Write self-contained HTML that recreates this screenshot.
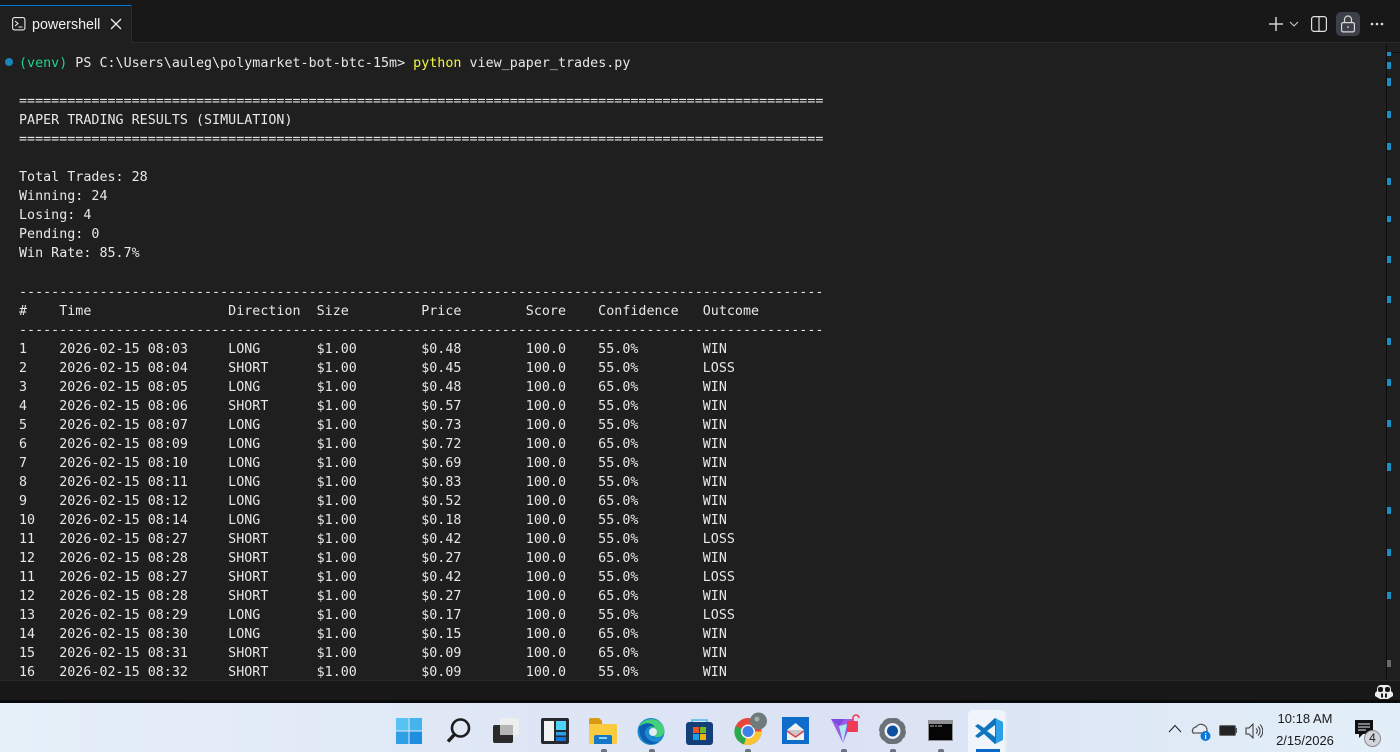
<!DOCTYPE html>
<html><head><meta charset="utf-8">
<style>
html,body{margin:0;padding:0;background:#1f1f1f}
#r{position:relative;width:1400px;height:752px;overflow:hidden;background:#1f1f1f}
#r div,#r svg,#r pre{position:absolute}
pre{margin:0;font:13.33px/19px "DejaVu Sans Mono",monospace;color:#e8e8e8;left:19px;top:54px;letter-spacing:.02px}
.y{color:#f5f543}.g{color:#23d18b}
.m{left:1387px;width:4px;background:#1a8fc4}
</style></head><body><div id="r">
<div style="left:0;top:0;width:1400px;height:43px;background:#181818"></div>
<div style="left:0;top:42px;width:1400px;height:1px;background:#2b2b2b"></div>
<div style="left:0;top:5px;width:131px;height:38px;background:#1f1f1f;border-top:1px solid #0078d4;box-sizing:border-box"></div>
<div style="left:131px;top:5px;width:1px;height:38px;background:#2b2b2b"></div>
<svg style="left:12px;top:17px" width="14" height="14" viewBox="0 0 14 14" fill="none" stroke="#e8e8e8" stroke-width="1.1"><rect x=".6" y=".6" width="12.3" height="12.3" rx="2"/><path d="M3 4l3 2.5-3 2.5M6.500 10h4"/></svg>
<div style="left:32px;top:16px;font:14.300px/18px 'Liberation Sans',sans-serif;color:#f0f0f0">powershell</div>
<svg style="left:110px;top:18px" width="12" height="12" viewBox="0 0 12 12" stroke="#eee" stroke-width="1.300"><path d="M1 1l10 10M11 1L1 11"/></svg>
<svg style="left:1268px;top:16px" width="16" height="16" stroke="#eee" stroke-width="1.300"><path d="M8 1v14M1 8h14"/></svg>
<svg style="left:1289px;top:21px" width="10" height="6" fill="none" stroke="#ccc" stroke-width="1.100"><path d="M1 1l4 4 4-4"/></svg>
<svg style="left:1311px;top:16px" width="16" height="16" fill="none" stroke="#e0e0e0" stroke-width="1.200"><rect x=".6" y=".6" width="14.800" height="14.800" rx="2.500"/><path d="M8 1v14"/></svg>
<div style="left:1336px;top:12px;width:24px;height:24px;border-radius:5px;background:#3e4049"></div>
<svg style="left:1340px;top:15px" width="16" height="18" fill="none" stroke="#d8d8d8" stroke-width="1.200"><rect x="1.600" y="7.600" width="12.800" height="9.300" rx="1.500"/><path d="M4.500 7.500V4.500a3.500 3.500 0 0 1 7 0v3"/><circle cx="8" cy="12" r=".9" fill="#ddd" stroke="none"/></svg>
<svg style="left:1370px;top:22px" width="14" height="4" fill="#ddd"><circle cx="2" cy="2" r="1.300"/><circle cx="7" cy="2" r="1.300"/><circle cx="12" cy="2" r="1.300"/></svg>
<div style="left:5px;top:58px;width:8px;height:8px;border-radius:50%;background:#1a85b5"></div>
<pre><span class="g">(venv)</span> PS C:\Users\auleg\polymarket-bot-btc-15m&gt; <span class="y">python</span> view_paper_trades.py

====================================================================================================
PAPER TRADING RESULTS (SIMULATION)
====================================================================================================

Total Trades: 28</pre>
<pre style="top:187px">Winning: 24
Losing: 4
Pending: 0
Win Rate: 85.7%</pre>
<pre style="top:283px">----------------------------------------------------------------------------------------------------
#    Time                 Direction  Size         Price        Score    Confidence   Outcome
----------------------------------------------------------------------------------------------------
1    2026-02-15 08:03     LONG       $1.00        $0.48        100.0    55.0%        WIN
2    2026-02-15 08:04     SHORT      $1.00        $0.45        100.0    55.0%        LOSS
3    2026-02-15 08:05     LONG       $1.00        $0.48        100.0    65.0%        WIN
4    2026-02-15 08:06     SHORT      $1.00        $0.57        100.0    55.0%        WIN
5    2026-02-15 08:07     LONG       $1.00        $0.73        100.0    55.0%        WIN
6    2026-02-15 08:09     LONG       $1.00        $0.72        100.0    65.0%        WIN
7    2026-02-15 08:10     LONG       $1.00        $0.69        100.0    55.0%        WIN
8    2026-02-15 08:11     LONG       $1.00        $0.83        100.0    55.0%        WIN
9    2026-02-15 08:12     LONG       $1.00        $0.52        100.0    65.0%        WIN
10   2026-02-15 08:14     LONG       $1.00        $0.18        100.0    55.0%        WIN
11   2026-02-15 08:27     SHORT      $1.00        $0.42        100.0    55.0%        LOSS
12   2026-02-15 08:28     SHORT      $1.00        $0.27        100.0    65.0%        WIN
11   2026-02-15 08:27     SHORT      $1.00        $0.42        100.0    55.0%        LOSS
12   2026-02-15 08:28     SHORT      $1.00        $0.27        100.0    65.0%        WIN
13   2026-02-15 08:29     LONG       $1.00        $0.17        100.0    55.0%        LOSS
14   2026-02-15 08:30     LONG       $1.00        $0.15        100.0    65.0%        WIN
15   2026-02-15 08:31     SHORT      $1.00        $0.09        100.0    65.0%        WIN
16   2026-02-15 08:32     SHORT      $1.00        $0.09        100.0    55.0%        WIN</pre>
<div style="left:1386px;top:43px;width:1px;height:637px;background:#0c0c10"></div>
<div style="left:1386px;top:52px;width:14px;height:1px;background:#0c0c10"></div>
<div class="m" style="top:52px;height:4px"></div><div class="m" style="top:62px;height:7px"></div><div class="m" style="top:78px;height:8px"></div><div class="m" style="top:111px;height:7px"></div><div class="m" style="top:143px;height:7px"></div><div class="m" style="top:178px;height:7px"></div><div class="m" style="top:216px;height:6px"></div><div class="m" style="top:256px;height:7px"></div><div class="m" style="top:296px;height:7px"></div><div class="m" style="top:338px;height:7px"></div><div class="m" style="top:379px;height:7px"></div><div class="m" style="top:420px;height:7px"></div><div class="m" style="top:463px;height:8px"></div><div class="m" style="top:507px;height:7px"></div><div class="m" style="top:549px;height:7px"></div><div class="m" style="top:592px;height:7px"></div>
<div class="m" style="top:660px;height:7px;background:#6a6a6a"></div>
<div style="left:0;top:680px;width:1400px;height:23px;background:#181818;border-top:1px solid #2b2b2b;box-sizing:border-box"></div>
<svg style="left:1374px;top:684px" width="20" height="16"><path d="M3 7V5a4 4 0 0 1 4-4h6a4 4 0 0 1 4 4v2l2 2v3l-5 3H6l-5-3V9z" fill="#eee"/><rect x="4" y="3" width="5" height="5" rx="2" fill="#181818"/><rect x="11" y="3" width="5" height="5" rx="2" fill="#181818"/><rect x="7" y="9.500" width="2" height="4" fill="#181818"/><rect x="11" y="9.500" width="2" height="4" fill="#181818"/></svg>
<div style="left:0;top:700px;width:1400px;height:3px;background:#0a0a0a"></div>
<div style="left:0;top:703px;width:1400px;height:49px;background:linear-gradient(90deg,#e6f0f9 0%,#dfe7f6 35%,#dbe2f4 60%,#dfeaf6 85%,#e3eff8 100%)"></div>

<!-- start -->
<svg style="left:396px;top:718px" width="26" height="26"><g fill="#3aa6ea"><rect x="0" y="0" width="12.500" height="12.500" fill="#58c3f2"/><rect x="13.500" y="0" width="12.500" height="12.500" fill="#45b3ee"/><rect x="0" y="13.500" width="12.500" height="12.500" fill="#2f9fe6"/><rect x="13.500" y="13.500" width="12.500" height="12.500" fill="#1f8de0"/></g></svg>
<!-- search -->
<svg style="left:445px;top:717px" width="27" height="27" fill="none" stroke="#1c1c1c"><circle cx="15.500" cy="11" r="8.500" stroke-width="2.600"/><path d="M9.500 17.500L3 24.500" stroke-width="3.400"/></svg>
<!-- task view -->
<svg style="left:493px;top:718px" width="27" height="26"><rect x="0" y="7" width="20" height="18" rx="2" fill="#2a2a2a"/><rect x="7" y="0" width="19" height="17" rx="2" fill="#eeeeee"/><rect x="7" y="7" width="13" height="10" fill="#b5b5b5"/></svg>
<!-- widgets -->
<svg style="left:541px;top:718px" width="28" height="26"><rect width="28" height="26" rx="2" fill="#262a30"/><rect x="3" y="3" width="10" height="20" fill="#f2f2f2"/><rect x="15" y="3" width="10" height="9" fill="#4fd2f5"/><rect x="15" y="14" width="10" height="3.500" fill="#2aa0e8"/><rect x="15" y="19" width="10" height="4" fill="#0d78d8"/></svg>
<!-- explorer -->
<svg style="left:589px;top:718px" width="28" height="26"><path d="M0 2a2 2 0 0 1 2-2h8l3 3h0v6H0z" fill="#d99a12"/><path d="M0 6h26a2 2 0 0 1 2 2v16a2 2 0 0 1-2 2H2a2 2 0 0 1-2-2z" fill="#fbcb3f"/><path d="M5 26v-7a2 2 0 0 1 2-2h14a2 2 0 0 1 2 2v7z" fill="#1478c8"/><rect x="10" y="19" width="8" height="2" fill="#8fd0f5"/></svg>
<div style="left:601px;top:749px;width:6px;height:3px;border-radius:2px 2px 0 0;background:#6b7280"></div>
<!-- edge -->
<svg style="left:637px;top:718px" width="28" height="28"><circle cx="14" cy="13.500" r="13.500" fill="#1b8ad0"/><path d="M2 9C5 0 22-3 27 10c2 8-6 11-10 8 4-1 4-6-1-8C10 8 4 9 2 9z" fill="#45d07a"/><path d="M2 9c5-5 13-5 16 0-5-2-11 1-10 7 1 5 7 9 14 8-9 5-20 1-20-16z" fill="#0a5fb0"/><circle cx="16" cy="14" r="4" fill="#e4ecf8"/></svg>
<div style="left:649px;top:749px;width:6px;height:3px;border-radius:2px 2px 0 0;background:#6b7280"></div>
<!-- store -->
<svg style="left:686px;top:718px" width="27" height="27"><path d="M6 5V2h15v3" fill="none" stroke="#46b8ea" stroke-width="1.500"/><rect x="0" y="4" width="27" height="23" rx="3" fill="#123f78"/><rect x="7" y="9" width="6" height="6" fill="#e8542c"/><rect x="14" y="9" width="6" height="6" fill="#74b82c"/><rect x="7" y="16" width="6" height="6" fill="#1aa0e8"/><rect x="14" y="16" width="6" height="6" fill="#f5b40a"/></svg>
<!-- chrome -->
<svg style="left:734px;top:712px" width="34" height="34"><circle cx="14" cy="19.500" r="13.500" fill="#e8463a"/><path d="M14 19.500L27.500 19.500A13.500 13.500 0 0 1 10 32.400z" fill="#f7c531"/><path d="M14 19.500L10 32.400A13.500 13.500 0 0 1 1.500 14z" fill="#2ea84e"/><circle cx="14" cy="19.500" r="7" fill="#f2f2f2"/><circle cx="14" cy="19.500" r="5.500" fill="#3f7fe8"/><circle cx="24.500" cy="9" r="8.500" fill="#6f7a7c"/><circle cx="23" cy="7" r="2.500" fill="#a5adad"/></svg>
<div style="left:745px;top:749px;width:6px;height:3px;border-radius:2px 2px 0 0;background:#6b7280"></div>
<!-- mail -->
<svg style="left:782px;top:717px" width="27" height="27"><rect width="27" height="27" fill="#0f6cc8"/><path d="M5 13l8.500-7 8.500 7v10H5z" fill="#f0f0f0"/><path d="M5 13l8.500 7 8.500-7" fill="#c8c8c8"/><path d="M5 14l8.500 6 8.500-6" fill="none" stroke="#d8404a" stroke-width="1.500"/></svg>
<!-- vpn -->
<svg style="left:830px;top:714px" width="32" height="30"><path d="M1 5h22L13 29z" fill="#a05ae8"/><path d="M1 5h14l-6 7z" fill="#7a4ce0"/><path d="M9 12l8-2-4 19z" fill="#a8ecea"/><rect x="17" y="7" width="11" height="11" rx="1" fill="#f03a58"/><path d="M23 7V4a3 3 0 0 1 6 0" fill="none" stroke="#f03a58" stroke-width="1.600"/></svg>
<div style="left:841px;top:749px;width:6px;height:3px;border-radius:2px 2px 0 0;background:#6b7280"></div>
<!-- settings -->
<svg style="left:879px;top:718px" width="27" height="26"><circle cx="13.500" cy="13" r="10.500" fill="none" stroke="#6b7178" stroke-width="5"/><circle cx="13.500" cy="13" r="11" fill="none" stroke="#6b7178" stroke-width="5" stroke-dasharray="6 2.600"/><circle cx="13.500" cy="13" r="7.500" fill="#f1f3f8"/><circle cx="13.500" cy="13" r="5.500" fill="#0c4f9e"/></svg>
<div style="left:890px;top:749px;width:6px;height:3px;border-radius:2px 2px 0 0;background:#6b7280"></div>
<!-- cmd -->
<svg style="left:928px;top:720px" width="25" height="21"><rect width="25" height="21" fill="#8f9196"/><rect x="1" y="4" width="23" height="16" fill="#050505"/><path d="M2 6h4M7 6h2M10 6h4" stroke="#bbb" stroke-width="1"/></svg>
<div style="left:938px;top:749px;width:6px;height:3px;border-radius:2px 2px 0 0;background:#6b7280"></div>
<!-- vscode -->
<div style="left:968px;top:710px;width:37px;height:42px;border-radius:5px 5px 0 0;background:#f0f4fb;box-shadow:2px 0 0 #e4eaf6"></div>
<svg style="left:975px;top:717px" width="28" height="28"><path d="M20 1l8 4v18l-8 4-14-13z" fill="#2aa0e8"/><path d="M20 1L9 11 3 7 0 9l6 5-6 5 3 2 6-4 11 10 1-1V2z" fill="#0f75bd"/><path d="M20 8l-8 6 8 6z" fill="#f0f4fb"/></svg>
<div style="left:976px;top:749px;width:24px;height:3px;background:#0a68c8"></div>
<!-- tray -->
<svg style="left:1168px;top:724px" width="14" height="9" fill="none" stroke="#222" stroke-width="1.100"><path d="M1 8l6-6.500L13 8"/></svg>
<svg style="left:1191px;top:722px" width="20" height="20"><path d="M2 11a4 4 0 0 1 3-6 6 6 0 0 1 11 3v3z" fill="#e8ecf4" stroke="#555" stroke-width="1.300"/><circle cx="14.500" cy="14" r="5" fill="#0a78d8"/><rect x="14" y="13" width="1.200" height="4" fill="#fff"/><rect x="14" y="11" width="1.200" height="1.200" fill="#fff"/></svg>
<svg style="left:1219px;top:725px" width="18" height="11"><rect x=".6" y=".6" width="15.800" height="9.800" rx="1" fill="#222" stroke="#555"/><rect x="16.500" y="3" width="1.500" height="5" fill="#555"/></svg>
<svg style="left:1245px;top:723px" width="18" height="16" fill="none" stroke="#333" stroke-width="1"><path d="M1 5h3l4-4v14l-4-4H1z"/><path d="M11 5.500a3 3 0 0 1 0 5M13 3.500a6 6 0 0 1 0 9M15 1.500a9 9 0 0 1 0 13"/></svg>
<div style="left:1270px;top:711px;width:70px;text-align:center;font:13px/16px 'Liberation Sans',sans-serif;color:#1b1b1b">10:18 AM</div>
<div style="left:1270px;top:733px;width:70px;text-align:center;font:13px/16px 'Liberation Sans',sans-serif;color:#1b1b1b">2/15/2026</div>
<svg style="left:1355px;top:720px" width="19" height="19"><path d="M0 0h18v14H8l-4 4v-4H0z" fill="#111"/><path d="M3 4h12M3 7h12M3 10h8" stroke="#e6eef8" stroke-width="1"/></svg>
<div style="left:1364px;top:730px;width:17px;height:17px;box-sizing:border-box;border:1px solid #8a8a8a;border-radius:50%;background:#d3d7dd;font:12px/15px 'Liberation Sans',sans-serif;color:#222;text-align:center">4</div>
</div></body></html>
